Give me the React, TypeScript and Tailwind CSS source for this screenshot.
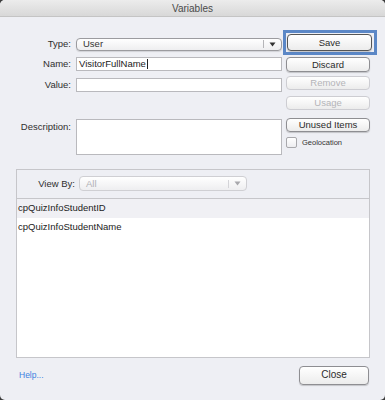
const font = { fontFamily: '"Liberation Sans", Arial, sans-serif' };

function Btn({ label, disabled, className = '' }: { label: string; disabled?: boolean; className?: string }) {
  return (
    <div
      className={`flex items-center justify-center rounded-[4px] border bg-gradient-to-b from-white to-[#ececec] text-[9.5px] leading-none ${
        disabled
          ? 'border-[#cdcdd2] text-[#b4b4b8]'
          : 'border-[#8e8e92] text-[#2b2b2b] shadow-[0_1px_1px_rgba(0,0,0,0.18)]'
      } ${className}`}
    >
      {label}
    </div>
  );
}

function Select({ value, disabled, className = '' }: { value: string; disabled?: boolean; className?: string }) {
  return (
    <div
      className={`flex items-center rounded-[4px] border bg-gradient-to-b from-white to-[#eeeef0] text-[9.5px] leading-none ${
        disabled ? 'border-[#cfcfd3] text-[#b0b0b4]' : 'border-[#9b9b9f] text-[#333] shadow-[0_1px_1px_rgba(0,0,0,0.12)]'
      } ${className}`}
    >
      <span className="flex-1 pl-[6px]">{value}</span>
      <span className={`h-[8px] w-px ${disabled ? 'bg-[#d4d4d8]' : 'bg-[#b5b5b8]'}`} />
      <svg width="7" height="5" viewBox="0 0 7 5" className="mx-[5px]">
        <path d="M0.5 0.5h6L3.5 4.5z" fill={disabled ? '#a8a8ac' : '#333'} />
      </svg>
    </div>
  );
}

export default function App() {
  return (
    <div className="h-[400px] w-[385px] bg-[#3c3c3c]" style={font}>
      <div className="flex h-full flex-col overflow-hidden rounded-[5px] bg-[#eeeff4]">
        <div className="flex h-[17px] shrink-0 items-center justify-center border-b border-[#c4c4c4] bg-gradient-to-b from-[#ececec] to-[#d8d8d8] text-[10px] text-[#4a4a4a]">
          Variables
        </div>

        <div className="flex">
          <div className="flex w-[282px] flex-col">
            <div className="mt-[20px] flex items-center">
              <span className="w-[72px] pr-[1px] text-right text-[9.5px] text-[#2e2e2e]">Type:</span>
              <Select value="User" className="ml-[4px] h-[13px] w-[206px]" />
            </div>
            <div className="mt-[6px] flex items-center">
              <span className="w-[72px] pr-[1px] text-right text-[9.5px] text-[#2e2e2e]">Name:</span>
              <div className="ml-[4px] flex h-[14px] w-[206px] items-center border border-[#b9b9bd] bg-white pl-[2px] text-[9.5px] text-[#222]">
                VisitorFullName
                <span className="ml-px h-[10px] w-px bg-[#222]" />
              </div>
            </div>
            <div className="mt-[6px] flex items-center">
              <span className="w-[72px] pr-[1px] text-right text-[9.5px] text-[#2e2e2e]">Value:</span>
              <div className="ml-[4px] h-[14px] w-[206px] border border-[#b9b9bd] bg-white" />
            </div>
            <div className="mt-[27px] flex items-start">
              <span className="w-[72px] pr-[1px] pt-[3px] text-right text-[9.5px] leading-none text-[#2e2e2e]">Description:</span>
              <div className="ml-[4px] h-[36px] w-[206px] border border-[#b9b9bd] bg-white" />
            </div>
          </div>

          <div className="ml-px flex flex-col">
            <div className="mt-[13px] h-[25px] w-[94px] border-[3px] border-[#5b87c6] p-px">
              <Btn label="Save" className="h-full w-[85px] !border-[#555]" />
            </div>
            <Btn label="Discard" className="ml-[3px] mt-[2px] h-[15px] w-[84px]" />
            <Btn label="Remove" disabled className="ml-[3px] mt-[4px] h-[14px] w-[84px]" />
            <Btn label="Usage" disabled className="ml-[3px] mt-[6px] h-[14px] w-[84px]" />
            <Btn label="Unused Items" className="ml-[3px] mt-[8px] h-[14px] w-[84px]" />
            <div className="ml-[3px] mt-[5px] flex items-center">
              <span className="h-[11px] w-[11px] rounded-[2px] border border-[#a8a8ac] bg-gradient-to-b from-white to-[#ededf0]" />
              <span className="ml-[5px] text-[7.5px] text-[#333]">Geolocation</span>
            </div>
          </div>
        </div>

        <div className="ml-[16px] mt-[14px] flex h-[189px] w-[354px] flex-col border border-[#c6c6ca]">
          <div className="flex h-[29px] shrink-0 items-center border-b border-[#c6c6ca]">
            <span className="w-[58px] text-right text-[9.5px] text-[#2e2e2e]">View By:</span>
            <Select value="All" disabled className="ml-[4px] h-[15px] w-[168px]" />
          </div>
          <div className="flex-1 bg-white text-[9.5px] text-[#222]">
            <div className="flex h-[19px] items-center bg-[#f0f0f4] pl-px">cpQuizInfoStudentID</div>
            <div className="flex h-[19px] items-center pl-px">cpQuizInfoStudentName</div>
          </div>
        </div>

        <div className="ml-[19px] mt-[8px] flex items-center">
          <span className="text-[8.5px] text-[#3d7fe0]">Help...</span>
          <Btn label="Close" className="ml-auto mr-[16px] h-[19px] w-[70px] text-[10px]" />
        </div>
      </div>
    </div>
  );
}
